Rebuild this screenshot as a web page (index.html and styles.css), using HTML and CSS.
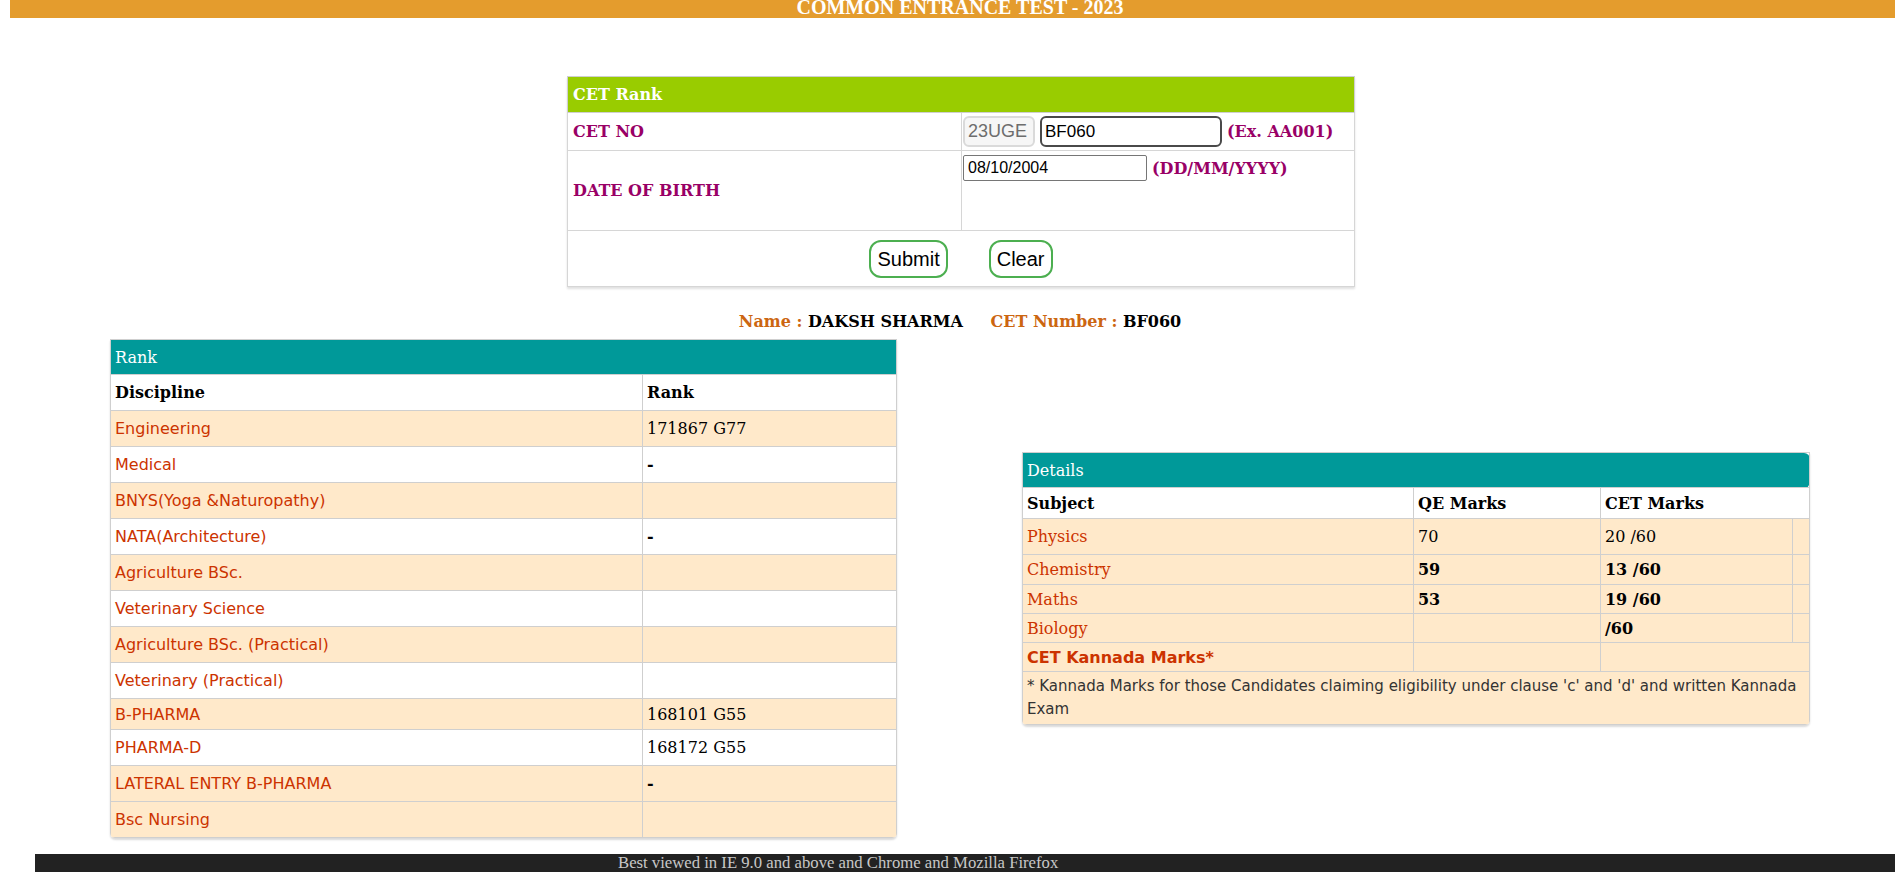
FILE: index.html
```html
<!DOCTYPE html>
<html lang="en">
<head>
<meta charset="utf-8">
<title>CET Rank</title>
<link rel="stylesheet" href="styles.css">
</head>
<body>
<div class="page">
  <div class="topbar">COMMON ENTRANCE TEST - 2023</div>

  <main class="content">
    <table class="cet-table">
      <colgroup><col class="cet-c1"><col class="cet-c2"></colgroup>
      <tr class="cet-head"><th colspan="2">CET Rank</th></tr>
      <tr class="cet-row-no">
        <td class="cet-lbl">CET NO</td>
        <td class="cet-fields">
          <div class="field-line">
            <input class="pre-input" type="text" value="23UGE" readonly>
            <input class="no-input" type="text" value="BF060">
            <span class="hint">(Ex. AA001)</span>
          </div>
        </td>
      </tr>
      <tr class="cet-row-dob">
        <td class="cet-lbl">DATE OF BIRTH</td>
        <td class="cet-fields cet-top">
          <div class="field-line">
            <input class="dob-input" type="text" value="08/10/2004">
            <span class="hint">(DD/MM/YYYY)</span>
          </div>
        </td>
      </tr>
      <tr class="cet-row-btn">
        <td colspan="2">
          <div class="btns">
            <button class="btn" type="button">Submit</button>
            <button class="btn" type="button">Clear</button>
          </div>
        </td>
      </tr>
    </table>

    <p class="cand">
      <span class="cand-k">Name :</span> <span class="cand-v">DAKSH SHARMA</span>
      <span class="cand-k cand-gap">CET Number :</span> <span class="cand-v">BF060</span>
    </p>

    <div class="results">
      <div class="card">
        <table class="rank">
          <colgroup><col class="rk-c1"><col class="rk-c2"></colgroup>
          <tr class="title"><th colspan="2">Rank</th></tr>
          <tr class="colhead"><th>Discipline</th><th>Rank</th></tr>
          <tr class="alt"><td class="lbl">Engineering</td><td class="val">171867 G77</td></tr>
          <tr><td class="lbl">Medical</td><td class="val"><b>-</b></td></tr>
          <tr class="alt"><td class="lbl">BNYS(Yoga &amp;Naturopathy)</td><td class="val"></td></tr>
          <tr><td class="lbl">NATA(Architecture)</td><td class="val"><b>-</b></td></tr>
          <tr class="alt"><td class="lbl">Agriculture BSc.</td><td class="val"></td></tr>
          <tr><td class="lbl">Veterinary Science</td><td class="val"></td></tr>
          <tr class="alt"><td class="lbl">Agriculture BSc. (Practical)</td><td class="val"></td></tr>
          <tr><td class="lbl">Veterinary (Practical)</td><td class="val"></td></tr>
          <tr class="alt short"><td class="lbl">B-PHARMA</td><td class="val">168101 G55</td></tr>
          <tr><td class="lbl">PHARMA-D</td><td class="val">168172 G55</td></tr>
          <tr class="alt"><td class="lbl">LATERAL ENTRY B-PHARMA</td><td class="val"><b>-</b></td></tr>
          <tr class="alt"><td class="lbl">Bsc Nursing</td><td class="val"></td></tr>
        </table>
      </div>

      <div class="card">
        <table class="details">
          <colgroup><col class="dt-c1"><col class="dt-c2"><col class="dt-c3"><col class="dt-c4"></colgroup>
          <tr class="title"><th colspan="4">Details</th></tr>
          <tr class="colhead"><th>Subject</th><th>QE Marks</th><th colspan="2">CET Marks</th></tr>
          <tr class="alt h36"><td class="lbl">Physics</td><td class="val">70</td><td class="val">20 /60</td><td></td></tr>
          <tr class="alt h30"><td class="lbl">Chemistry</td><td class="val"><b>59</b></td><td class="val"><b>13 /60</b></td><td></td></tr>
          <tr class="alt h29"><td class="lbl">Maths</td><td class="val"><b>53</b></td><td class="val"><b>19 /60</b></td><td></td></tr>
          <tr class="alt h29"><td class="lbl">Biology</td><td class="val"></td><td class="val"><b>/60</b></td><td></td></tr>
          <tr class="alt h29"><td class="kan">CET Kannada Marks*</td><td></td><td colspan="2"></td></tr>
          <tr class="alt"><td colspan="4" class="note">* Kannada Marks for those Candidates claiming eligibility under clause 'c' and 'd' and written Kannada Exam</td></tr>
        </table>
      </div>
    </div>
  </main>

  <footer class="footer">Best viewed in IE 9.0 and above and Chrome and Mozilla Firefox</footer>
</div>
</body>
</html>
```

FILE: styles.css
```css
html, body {
  margin: 0;
  padding: 0;
  overflow-x: hidden;
  background: #fff;
}

.page {
  width: 1900px;
  margin-left: 10px;
}

.topbar {
  height: 18px;
  background: #e49c2d;
  color: #fff;
  font: bold 20px/15px "Liberation Serif", serif;
  text-align: center;
}

.content {
  padding-top: 58px;
}

table {
  border-collapse: collapse;
  table-layout: fixed;
}

td, th {
  padding: 0;
}

/* ---------- CET Rank form ---------- */
.cet-table {
  width: 787px;
  margin-left: 557px;
  border: 1px solid #cfcfcf;
  box-shadow: 0 2px 2px rgba(0, 0, 0, 0.12);
  font-family: "DejaVu Serif", serif;
}

.cet-c1 { width: 394px; }
.cet-c2 { width: 393px; }

.cet-table td {
  border: 1px solid #d6d6d6;
}

.cet-head th {
  height: 35px;
  background: #99cc00;
  color: #fff;
  font-size: 16px;
  font-weight: bold;
  text-align: left;
  padding: 0 5px;
  border: 1px solid #cfcfcf;
}

.cet-lbl {
  color: #990066;
  font-size: 16px;
  font-weight: bold;
  padding: 0 5px !important;
}

.cet-row-no td { height: 37px; }
.cet-row-dob td { height: 79px; }
.cet-row-btn td { height: 55px; }

.cet-fields {
  padding: 0 0 0 1px !important;
}

.cet-top {
  vertical-align: top;
}

.cet-top .field-line {
  padding-top: 4px;
}

.field-line {
  display: flex;
  align-items: center;
  gap: 5px;
}

.pre-input,
.no-input,
.dob-input {
  box-sizing: border-box;
  margin: 0;
  font-family: "Liberation Sans", Arial, sans-serif;
  outline: none;
}

.pre-input {
  width: 72px;
  height: 31px;
  border: 2px solid #dadada;
  border-radius: 6px;
  background: #f6f6f6;
  color: #6d6d6d;
  font-size: 18px;
  padding: 0 3px;
}

.no-input {
  width: 182px;
  height: 31px;
  border: 2px solid #4a4a4a;
  border-radius: 6px;
  background: #fff;
  color: #000;
  font-size: 17px;
  padding: 0 3px;
}

.dob-input {
  width: 184px;
  height: 26px;
  border: 1px solid #767676;
  border-radius: 2px;
  background: #fff;
  color: #000;
  font-size: 16px;
  padding: 0 4px;
}

.hint {
  color: #990066;
  font-size: 16px;
  font-weight: bold;
}

.btns {
  display: flex;
  justify-content: center;
  gap: 41px;
}

.btn {
  box-sizing: border-box;
  height: 38px;
  padding: 0 6px;
  border: 2px solid #4caf50;
  border-radius: 12px;
  background: #fff;
  color: #000;
  font: 20px/24px "Liberation Sans", Arial, sans-serif;
  cursor: pointer;
}

/* ---------- Candidate line ---------- */
.cand {
  margin: 24px 0 6px;
  text-align: center;
  font: bold 16px/22px "DejaVu Serif", serif;
  color: #000;
}

.cand-k {
  color: #cc6611;
}

.cand-gap {
  margin-left: 22px;
}

/* ---------- Result tables ---------- */
.results {
  width: 1700px;
  margin-left: 100px;
  display: flex;
  justify-content: space-between;
  align-items: center;
}

.card {
  border-radius: 0 0 5px 5px;
  box-shadow: 0 2px 2px rgba(0, 0, 0, 0.15);
  overflow: hidden;
}

.rank,
.details {
  border: 1px solid #cfcfcf;
  font-family: "DejaVu Serif", serif;
  font-size: 16px;
}

.rank { width: 786px; }
.details { width: 787px; }

.rk-c1 { width: 532px; }
.rk-c2 { width: 254px; }

.dt-c1 { width: 391px; }
.dt-c2 { width: 187px; }
.dt-c3 { width: 192px; }
.dt-c4 { width: 17px; }

.rank td, .rank th,
.details td, .details th {
  border: 1px solid #cfcfcf;
  text-align: left;
  padding: 0 4px;
}

.title th {
  height: 34px;
  background: #009999;
  color: #fff;
  font-weight: normal;
}

.details .title th {
  border-top-right-radius: 6px;
  border-bottom-right-radius: 6px;
}

.colhead th {
  background: #fff;
  color: #000;
  font-weight: bold;
}

.rank .colhead th { height: 35px; }
.rank td { height: 35px; }
.rank tr.short td { height: 30px; }

.alt td {
  background: #ffe9ca;
}

.rank .lbl {
  color: #cc3300;
  font-family: "DejaVu Sans", sans-serif;
}

.val {
  color: #000;
}

.details .colhead th { height: 30px; }
.details .h36 td { height: 35px; }
.details .h30 td { height: 29px; }
.details .h29 td { height: 28px; }

.details .lbl {
  color: #cc3300;
}

.details .kan {
  color: #cc3300;
  font-family: "DejaVu Sans", sans-serif;
  font-weight: bold;
}

.details .note {
  height: 46px;
  padding: 3px 4px 3px;
  color: #333;
  font: 15px/23px "DejaVu Sans", sans-serif;
}

/* ---------- Footer ---------- */
.footer {
  margin-top: 16px;
  margin-left: 25px;
  height: 18px;
  padding-left: 583px;
  background: #222;
  color: #c8c8c8;
  font: 16.7px/18px "Liberation Serif", serif;
  white-space: nowrap;
  overflow: hidden;
}
```
